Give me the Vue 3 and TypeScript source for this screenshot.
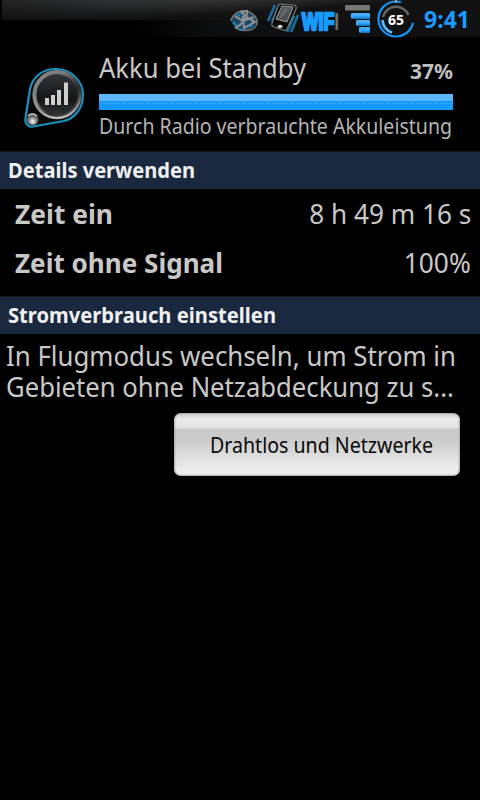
<script setup lang="ts">
import type { Directive } from 'vue'

interface UsageRow {
  label: string
  labelWidth: number
  value: string
  valueWidth: number
}

const rows: UsageRow[] = [
  { label: 'Zeit ein', labelWidth: 98, value: '8 h 49 m 16 s', valueWidth: 162 },
  { label: 'Zeit ohne Signal', labelWidth: 208, value: '100%', valueWidth: 67 },
]

const hint = [
  { text: 'In Flugmodus wechseln, um Strom in', width: 450 },
  { text: 'Gebieten ohne Netzabdeckung zu s...', width: 448 },
]

const signalBars = [
  { x: 0, y: 1, w: 25, color: '#777' },
  { x: 6, y: 9, w: 19, color: '#45aefb' },
  { x: 11, y: 16, w: 14, color: '#45aefb' },
  { x: 14, y: 23, w: 11, color: '#45aefb' },
]

// condenses a label horizontally to the given width in px
const vFit: Directive<HTMLElement, number> = {
  mounted(el, binding) {
    el.style.transform = `scaleX(${binding.value / el.getBoundingClientRect().width})`
  },
}
</script>

<template>
  <div class="screen">
    <header class="status-bar">
      <svg class="icon-bluetooth" width="30" height="26" viewBox="0 0 30 26">
        <ellipse cx="15" cy="14" rx="12" ry="9" fill="#184866" />
        <path d="M2 14C4 5 14 2 20 5C28 8 30 16 26 20C22 25 9 24 6 20" fill="none" stroke="#6f777b" stroke-width="1.6" />
        <path d="M6 21C13 18 19 10 18 4L12 5L19 11L26 15L15 21L14 9M6 9L14 14L25 10" fill="none" stroke="#8c8f91" stroke-width="2.2" />
        <path d="M4 15L8 19M20 20L24 18M8 7L11 9M10 22L14 23" stroke="#1d83bb" stroke-width="2" />
      </svg>
      <svg class="icon-phone" width="34" height="34" viewBox="0 0 34 34">
        <path d="M8 4L1 20M12 5L5 21M31 14L24 31M27 15L20 31" stroke="#176f9e" stroke-width="2.6" />
        <path d="M14 3L27 4Q30 5 29 8L20 28Q19 30 16 29L7 26Q4 25 5 22L11 5Q12 3 14 3Z" fill="#0a0a0a" stroke="#777b7e" stroke-width="1.2" />
        <path d="M15 5L26 6L20 21L9 18Z" fill="#4c5053" stroke="#a0a2a3" stroke-width="1" />
        <path d="M17 7L23 8L14 17L12 16Z" fill="#64686b" />
        <ellipse cx="13" cy="25.500" rx="2.500" ry="1.800" fill="#d4d4d4" />
      </svg>
      <svg class="icon-wifi" width="42" height="28" viewBox="0 0 42 28">
        <text class="wifi-text" x="2" y="22" textLength="37" lengthAdjust="spacingAndGlyphs">WIF<tspan class="wifi-off">I</tspan></text>
      </svg>
      <svg class="icon-signal" width="26" height="34" viewBox="0 0 26 34">
        <rect v-for="bar in signalBars" :key="bar.y" :x="bar.x" :y="bar.y" :width="bar.w" height="5.500" rx="1" :fill="bar.color" />
        <path d="M8 13.500H25M13 20.500H25M16 27.500H25" stroke="#168de6" stroke-width="2" />
      </svg>
      <svg class="icon-battery" width="40" height="38" viewBox="0 0 40 38">
        <path d="M20 1.500A17.500 17.500 0 1 0 37 23" fill="none" stroke="#1595f5" stroke-width="2.200" />
        <path d="M20 1.500A18 18 0 0 1 25 2.300" fill="none" stroke="#1595f5" stroke-width="2" />
        <path d="M7 17A13.500 13.500 0 0 1 32.500 15" fill="none" stroke="#666" stroke-width="2.500" />
        <path d="M6.500 20A13.500 13.500 0 0 0 16 32.500" fill="none" stroke="#5bb7fb" stroke-width="2.800" />
        <path d="M20 0V3" stroke="#999" stroke-width="2" />
        <text class="battery-text" x="20" y="25" text-anchor="middle" textLength="16" lengthAdjust="spacingAndGlyphs">65</text>
      </svg>
      <span class="clock"><span v-fit="46" class="fit">9:41</span></span>
    </header>

    <section class="summary">
      <svg class="badge" width="64" height="64" viewBox="0 0 64 64">
        <defs>
          <linearGradient id="ring" x1="0" y1="0" x2="1" y2="1">
            <stop offset="0" stop-color="#8a8a8a" />
            <stop offset="0.35" stop-color="#777" />
            <stop offset="0.65" stop-color="#2a2a2a" />
            <stop offset="1" stop-color="#555" />
          </linearGradient>
          <linearGradient id="ringLow" x1="0" y1="0" x2="0" y2="1">
            <stop offset="0.4" stop-color="#bbb" stop-opacity="0" />
            <stop offset="1" stop-color="#bbb" />
          </linearGradient>
          <linearGradient id="face" x1="0" y1="0" x2="0" y2="1">
            <stop offset="0" stop-color="#34383b" />
            <stop offset="0.6" stop-color="#141617" />
            <stop offset="1" stop-color="#333638" />
          </linearGradient>
          <radialGradient id="knob" cx="0.5" cy="0.7" r="0.6">
            <stop offset="0" stop-color="#fff" />
            <stop offset="0.45" stop-color="#999" />
            <stop offset="1" stop-color="#333" />
          </radialGradient>
        </defs>
        <path d="M8 24C11 11 21 4 34 4C49 4 61 16 61 30C61 43 53 53 42 56L11 61.500C6 62.500 2.500 58 3.500 53Z" fill="#080808" stroke="#1b8fbe" stroke-width="2.200" />
        <circle cx="35" cy="29.500" r="22.500" fill="url(#face)" stroke="url(#ring)" stroke-width="4" />
        <circle cx="35" cy="29.500" r="23.500" fill="none" stroke="url(#ringLow)" stroke-width="2.500" />
        <path d="M23 33H27V40H23ZM29 30H33V40H29ZM35 25H39V40H35ZM42 17.500H46V40H42Z" fill="#cfcfcf" />
        <circle cx="10.700" cy="54" r="6" fill="url(#knob)" />
        <path d="M6 51Q10 47 15 51" fill="none" stroke="#ccc" stroke-width="1.200" />
      </svg>
      <div class="info">
        <div class="title-row">
          <span v-fit="207" class="title fit">Akku bei Standby</span>
          <span v-fit="43" class="percent fit right">37%</span>
        </div>
        <div class="progress"></div>
        <span v-fit="353" class="subtitle fit">Durch Radio verbrauchte Akkuleistung</span>
      </div>
    </section>

    <h2 class="section-title"><span v-fit="187" class="fit">Details verwenden</span></h2>
    <div class="rows">
      <div v-for="row in rows" :key="row.label" class="row">
        <span v-fit="row.labelWidth" class="row-label fit">{{ row.label }}</span>
        <span v-fit="row.valueWidth" class="fit right">{{ row.value }}</span>
      </div>
    </div>

    <h2 class="section-title"><span v-fit="268" class="fit">Stromverbrauch einstellen</span></h2>
    <div class="hint">
      <div v-for="line in hint" :key="line.text">
        <span v-fit="line.width" class="fit">{{ line.text }}</span>
      </div>
    </div>
    <button class="action"><span v-fit="223" class="fit">Drahtlos und Netzwerke</span></button>
  </div>
</template>

<style>
body {
  background: #000;
}
</style>

<style scoped>
.screen {
  width: 480px;
  height: 800px;
  overflow: hidden;
  display: flex;
  flex-direction: column;
  background: #000;
  color: #c8c8c8;
  font-family: 'Noto Sans', sans-serif;
  font-size: 27px;
}

.fit {
  display: inline-block;
  white-space: nowrap;
  transform-origin: left;
}

.fit.right {
  transform-origin: right;
}

.status-bar {
  height: 38px;
  flex: none;
  display: flex;
  align-items: flex-start;
  padding-left: 229px;
  background:
    linear-gradient(90deg, #000 0 2px, transparent 2px),
    linear-gradient(176deg, transparent 0, rgba(0, 0, 0, 0.8) 30px) 0 0 / 480px 20px no-repeat,
    linear-gradient(90deg, #222 0, #383b3d 100px, #555 220px, #5a5a5a 300px, #555 480px) 0 0 / 480px 20px no-repeat,
    linear-gradient(90deg, transparent 130px, #0d0e0f 220px, #101112) 0 20px / 480px 17px no-repeat,
    #000;
}

.status-bar svg {
  flex: none;
}

.icon-bluetooth {
  margin-top: 7px;
}

.icon-phone {
  margin: 1px 0 0 8px;
}

.icon-wifi {
  margin: 8px 0 0 -1px;
}

.wifi-text {
  font-family: 'Liberation Sans', sans-serif;
  font-size: 23px;
  font-weight: 700;
  fill: #169bff;
  stroke: #169bff;
  stroke-width: 2.5;
}

.wifi-off {
  fill: #707070;
  stroke: none;
}

.icon-signal {
  margin: 4px 0 0 3px;
}

.icon-battery {
  margin-left: 5px;
}

.battery-text {
  font-size: 14px;
  font-weight: 700;
  fill: #fff;
}

.clock {
  margin-left: 8px;
  font-size: 23px;
  font-weight: 700;
  line-height: 38px;
  color: #1c9bff;
}

.summary {
  height: 113px;
  flex: none;
  display: flex;
}

.badge {
  flex: none;
  margin: 27px 13px 0 22px;
}

.info {
  width: 354px;
  padding-top: 13px;
  display: flex;
  flex-direction: column;
  align-items: flex-start;
}

.title-row {
  width: 100%;
  height: 34px;
  display: flex;
  justify-content: space-between;
  align-items: flex-start;
}

.title {
  line-height: 34px;
}

.percent {
  font-size: 21px;
  font-weight: 700;
  line-height: 40px;
  color: #bebebe;
}

.progress {
  width: 100%;
  height: 16px;
  flex: none;
  margin-top: 9px;
  background:
    repeating-linear-gradient(90deg, transparent 0 2px, #5cb5ff 2px 3px) 0 9px / 100% 1px no-repeat,
    linear-gradient(#5cb5ff 0 7px, #149aff 7px);
}

.subtitle {
  font-size: 22px;
  line-height: 30px;
  color: #b4b4b4;
}

.section-title {
  height: 38px;
  flex: none;
  box-sizing: border-box;
  margin: 0;
  padding-left: 8px;
  border-top: 1px solid #181818;
  background: #19283f;
  color: #f0f0f0;
  font-size: 21px;
  font-weight: 700;
  line-height: 37px;
}

.rows {
  padding: 0 9px 9px 15px;
}

.row {
  height: 49px;
  display: flex;
  justify-content: space-between;
  line-height: 49px;
}

.row-label {
  font-weight: 700;
}

.hint {
  padding: 6px 5px 11px 6px;
  line-height: 31px;
}

.hint div {
  height: 31px;
}

.action {
  width: 286px;
  height: 63px;
  flex: none;
  margin-left: 174px;
  padding: 0 0 0 36px;
  border: 0;
  border-radius: 7px;
  background: linear-gradient(#aaa 0, #d4d4d4 2px, #ececec 6px, #e2e2e2 15px, #c9c9c9 16px, #cdcdcd 28px, #dedede 43px, #ededed 56px, #eee 61px, #a5a5a5 63px);
  box-shadow: inset 2px 0 2px -1px #aaa, inset -2px 0 2px -1px #aaa;
  color: #080808;
  font-family: inherit;
  font-size: 22px;
  line-height: 63px;
  text-align: left;
}
</style>
